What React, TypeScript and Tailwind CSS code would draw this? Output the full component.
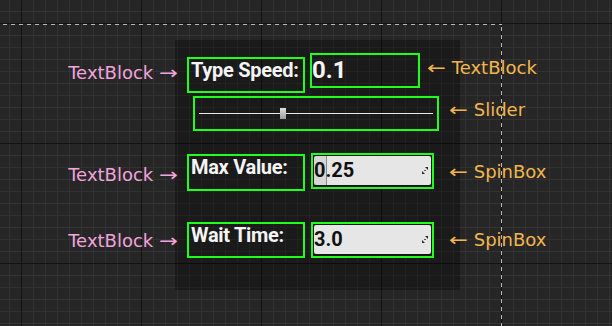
const gridBg =
  "bg-[#262626] [background-image:linear-gradient(to_right,#131313_1px,transparent_1px),linear-gradient(to_bottom,#131313_1px,transparent_1px),linear-gradient(to_right,#323232_1px,transparent_1px),linear-gradient(to_bottom,#323232_1px,transparent_1px)] [background-size:120px_120px,120px_120px,12px_12px,12px_12px] [background-position:21px_0,0_23px,9px_0,0_11px]";

// pink notes point at the widget from the left, orange ones from the right
const LeftNote = ({ className }: { className: string }) => (
  <div className={`flex justify-end -mr-[2px] ${className}`}>
    <span className="whitespace-pre font-['DejaVu_Sans',sans-serif] text-[18px] leading-[20px] text-[#f2a4dc]">
      TextBlock <span className="inline-block w-[18px] origin-left scale-x-[1.25]">→</span>
    </span>
  </div>
);

const RightNote = ({ label, className }: { label: string; className: string }) => (
  <span
    className={`shrink-0 whitespace-pre font-['DejaVu_Sans',sans-serif] text-[18px] leading-[20px] text-[#f4b64c] ${className}`}
  >
    <span className="inline-block w-[19px] origin-left scale-x-[1.25]">←</span> {label}
  </span>
);

const Label = ({ text, className }: { text: string; className: string }) => (
  <div
    className={`shrink-0 w-[118px] border-2 border-[#1eff1e] pl-[2px] text-[20px] leading-[23px] font-bold tracking-[-0.3px] text-[#f4f4f4] ${className}`}
  >
    {text}
  </div>
);

const ResizeIcon = () => (
  <svg width="6" height="7" viewBox="0 0 6 7" className="shrink-0">
    <polygon points="3,0 6,0 6,3" fill="#2a2a2a" />
    <polygon points="0,4 0,7 3,7" fill="#2a2a2a" />
    <rect x="2" y="3" width="2" height="1" fill="#555" />
  </svg>
);

const SpinBox = ({ value, filled }: { value: string; filled?: boolean }) => (
  <div className="shrink-0 ml-[6px] w-[123px] h-[36px] border-2 border-[#1eff1e] bg-[#151515] p-px pb-[2px]">
    <div
      className={`flex h-full items-center justify-between rounded-[2px] pr-[3px] ${
        filled
          ? "[background-image:linear-gradient(to_right,#d6d6d6_12px,#8a8a8a_12px,#8a8a8a_13px,#e6e6e6_13px)]"
          : "bg-[#e6e6e6]"
      }`}
    >
      <span className="text-[20px] leading-[23px] font-bold text-[#111]">{value}</span>
      <ResizeIcon />
    </div>
  </div>
);

export default function App() {
  return (
    <div
      className={`relative grid w-[612px] h-[326px] overflow-hidden grid-cols-[175px_285px_1fr] grid-rows-[40px_13px_40px_3px_35px_22px_38px_31px_36px_32px_1fr] font-['Roboto',sans-serif] ${gridBg}`}
    >
      {/* design surface guides */}
      <div className="absolute left-0 top-[24px] w-[502px] h-px [background-image:repeating-linear-gradient(to_right,transparent_0_3px,#b8b8b8_3px_7px,transparent_7px_8px)]" />
      <div className="absolute left-[501px] top-[24px] bottom-0 w-px [background-image:repeating-linear-gradient(to_bottom,transparent_0_3px,#b8b8b8_3px_7px,transparent_7px_8px)]" />

      {/* panel */}
      <div className="col-start-2 row-start-2 row-end-11 bg-black/30" />

      {/* Type Speed */}
      <LeftNote className="col-start-1 row-start-3 pt-[10px]" />
      <div className="col-start-2 col-end-4 row-start-3 flex items-start">
        <Label text="Type Speed:" className="ml-[12px] mt-[4px] h-[36px]" />
        <div className="shrink-0 ml-[5px] w-[110px] h-[35px] border-2 border-[#1eff1e] pt-px text-[24px] leading-[28px] font-bold text-[#f4f4f4]">
          0.1
        </div>
        <RightNote label="TextBlock" className="ml-[7px] mt-[5px]" />
      </div>

      {/* Slider */}
      <div className="col-start-2 col-end-4 row-start-5 flex items-start">
        <div className="shrink-0 ml-[18px] w-[246px] h-[35px] border-2 border-[#1eff1e] flex items-center px-[4px]">
          <div className="w-[81px] h-px bg-[#e8e8e8]" />
          <div className="w-[6px] h-[11px] bg-linear-to-b from-[#e0e0e0] to-[#9c9c9c]" />
          <div className="flex-1 h-px bg-[#e8e8e8]" />
        </div>
        <RightNote label="Slider" className="ml-[10px] mt-[4px]" />
      </div>

      {/* Max Value */}
      <LeftNote className="col-start-1 row-start-7 pt-[12px]" />
      <div className="col-start-2 col-end-4 row-start-7 flex items-start">
        <Label text="Max Value:" className="ml-[12px] mt-px h-[37px]" />
        <SpinBox value="0.25" filled />
        <RightNote label="SpinBox" className="ml-[15px] mt-[9px]" />
      </div>

      {/* Wait Time */}
      <LeftNote className="col-start-1 row-start-9 pt-[9px]" />
      <div className="col-start-2 col-end-4 row-start-9 flex items-start">
        <Label text="Wait Time:" className="ml-[12px] h-[36px]" />
        <SpinBox value="3.0" />
        <RightNote label="SpinBox" className="ml-[15px] mt-[8px]" />
      </div>
    </div>
  );
}
